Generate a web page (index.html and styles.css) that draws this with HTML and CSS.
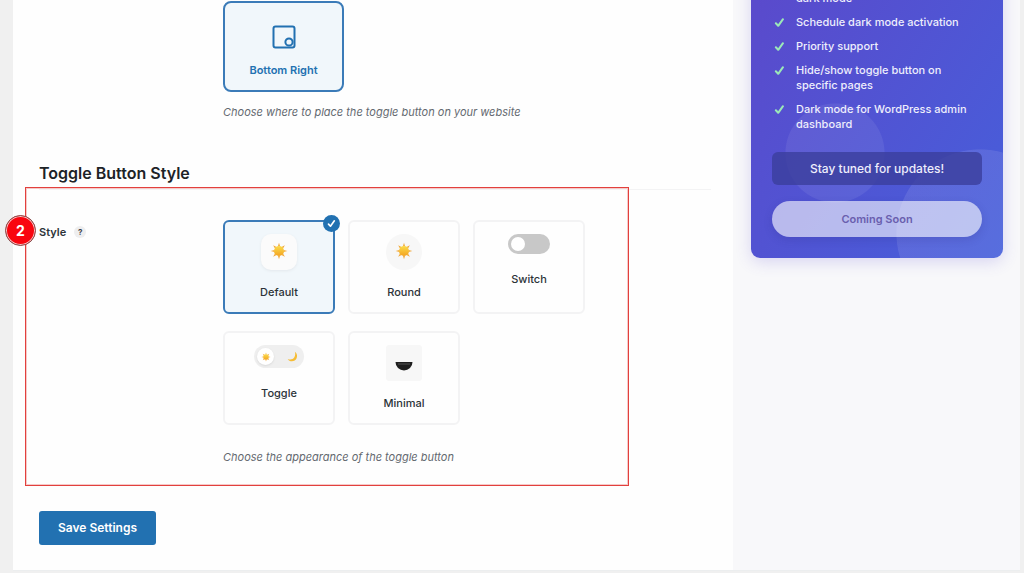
FILE: index.html
```
<!DOCTYPE html>
<html lang="en">
<head>
<meta charset="utf-8">
<meta name="viewport" content="width=device-width, initial-scale=1">
<title>Toggle Button Settings</title>
<link rel="stylesheet" href="styles.css">
</head>
<body>
<svg class="symbols" aria-hidden="true">
  <defs>
    <linearGradient id="sun-fill" x1="0" y1="0" x2="0" y2="1">
      <stop offset="0" stop-color="#fbdc4a"/>
      <stop offset="1" stop-color="#f3a322"/>
    </linearGradient>
  </defs>
  <symbol id="sun" viewBox="0 0 20 20">
    <path fill="#f2a93a" d="M10 0.800l1.200 4h-2.400zM10 19.200l1.200-4h-2.400zM0.800 10l4-1.200v2.400zM19.200 10l-4-1.200v2.400zM3.500 3.500l3.700 2-1.700 1.700zM16.500 3.500l-2 3.700-1.700-1.700zM3.500 16.500l2-3.700 1.700 1.700zM16.500 16.500l-3.700-2 1.700-1.700z"/>
    <circle cx="10" cy="10" r="5.6" fill="url(#sun-fill)"/>
  </symbol>
  <symbol id="check" viewBox="0 0 12 12">
    <path fill="none" stroke="currentColor" stroke-width="2.2" stroke-linecap="round" stroke-linejoin="round" d="M2 6.800l2.600 2.800L9.800 2.400"/>
  </symbol>
</svg>
<div class="shell">
  <main class="settings">
    <form class="form">
      <div class="row">
        <div class="field">
          <label class="tile tile-position">
            <input class="tile-input" type="radio" name="position" checked>
            <svg class="position-icon" viewBox="0 0 24 24" aria-hidden="true">
              <rect x="1.500" y="1.500" width="21" height="21" rx="2" fill="none" stroke="#2271b1" stroke-width="2"/>
              <circle cx="17" cy="17" r="3.600" fill="none" stroke="#2271b1" stroke-width="2"/>
            </svg>
            <span class="tile-name">Bottom Right</span>
          </label>
          <p class="hint">Choose where to place the toggle button on your website</p>
        </div>
      </div>

      <h2 class="section-title">Toggle Button Style</h2>

      <div class="row row-style">
        <div class="row-label">
          <span>Style</span>
          <button class="help" type="button" aria-label="Help">?</button>
        </div>
        <div class="field">
          <div class="tiles">
            <label class="tile tile-selected">
              <input class="tile-input" type="radio" name="style" checked>
              <span class="preview preview-default"><svg class="sun" aria-hidden="true"><use href="#sun"/></svg></span>
              <span class="tile-name">Default</span>
              <span class="tick"><svg class="tick-icon" aria-hidden="true"><use href="#check"/></svg></span>
            </label>
            <label class="tile">
              <input class="tile-input" type="radio" name="style">
              <span class="preview preview-round"><svg class="sun" aria-hidden="true"><use href="#sun"/></svg></span>
              <span class="tile-name">Round</span>
            </label>
            <label class="tile">
              <input class="tile-input" type="radio" name="style">
              <span class="preview preview-switch"><span class="switch-knob"></span></span>
              <span class="tile-name">Switch</span>
            </label>
            <label class="tile">
              <input class="tile-input" type="radio" name="style">
              <span class="preview preview-toggle">
                <span class="toggle-knob"><svg class="sun-small" aria-hidden="true"><use href="#sun"/></svg></span>
                <svg class="moon" viewBox="0 0 12 12" aria-hidden="true"><path fill="#f6bd35" d="M8.600 0.800C12 3.400 11.600 8.400 8.400 10.300C5.600 12 2 11 0.800 8.600C3.600 9.900 6.600 9.200 8 6.800C9.100 5 9.200 2.800 8.600 0.800z"/></svg>
              </span>
              <span class="tile-name">Toggle</span>
            </label>
            <label class="tile">
              <input class="tile-input" type="radio" name="style">
              <span class="preview preview-minimal"><svg class="half" viewBox="0 0 18 10" aria-hidden="true"><path fill="#1f1f1f" d="M0.500 1h17a8.500 8.500 0 0 1-17 0z"/><path stroke="#555" stroke-width="1" d="M3 3h12"/></svg></span>
              <span class="tile-name">Minimal</span>
            </label>
          </div>
          <p class="hint">Choose the appearance of the toggle button</p>
        </div>
        <div class="callout"><span class="callout-number">2</span></div>
      </div>

      <button class="save" type="submit">Save Settings</button>
    </form>
  </main>

  <aside class="sidebar">
    <section class="promo">
      <ul class="features">
        <li class="feature"><span class="feature-text">dark mode</span></li>
        <li class="feature"><svg class="feature-check" aria-hidden="true"><use href="#check"/></svg><span class="feature-text">Schedule dark mode activation</span></li>
        <li class="feature"><svg class="feature-check" aria-hidden="true"><use href="#check"/></svg><span class="feature-text">Priority support</span></li>
        <li class="feature"><svg class="feature-check" aria-hidden="true"><use href="#check"/></svg><span class="feature-text">Hide/show toggle button on specific pages</span></li>
        <li class="feature"><svg class="feature-check" aria-hidden="true"><use href="#check"/></svg><span class="feature-text">Dark mode for WordPress admin dashboard</span></li>
      </ul>
      <p class="notice">Stay tuned for updates!</p>
      <button class="soon" type="button">Coming Soon</button>
    </section>
  </aside>
</div>
</body>
</html>
```
FILE: styles.css
```
* { box-sizing: border-box; }

html { height: 100%; }

body {
  margin: 0;
  min-height: 100%;
  display: flex;
  padding: 0 4px 2px 13px;
  overflow: hidden;
  background: #f0f0f0;
  color: #2c3338;
  font-family: Inter, "Liberation Sans", sans-serif;
  font-size: 11px;
  line-height: 16px;
}

button { font: inherit; cursor: pointer; }

.symbols { position: absolute; width: 0; height: 0; }

.shell {
  flex: 1;
  display: grid;
  grid-template-columns: 1fr 287px;
  border-bottom: 1px solid #eceeef;
  background: #fefefe;
}

.settings { padding: 1px 22px 24px 26px; }

.row {
  position: relative;
  display: grid;
  grid-template-columns: 184px 1fr;
}

.field { grid-column: 2; }

.hint {
  margin: 12px 0 0;
  color: #646970;
  font-style: italic;
}

.section-title {
  margin: 41px 0 0;
  padding-bottom: 4px;
  border-bottom: 1px solid #f3f3f4;
  color: #1d2327;
  font-size: 16px;
  font-weight: 600;
  line-height: 24px;
}

.row-style { padding-top: 30px; }
.row-style .hint { margin-top: 24px; }

.row-label {
  display: flex;
  align-items: center;
  align-self: start;
  gap: 8px;
  padding-top: 4px;
  color: #2c3338;
  font-weight: 600;
}

.help {
  width: 12px;
  height: 12px;
  padding: 0;
  border: 0;
  border-radius: 50%;
  background: #eeeeef;
  color: #3c434a;
  font-size: 8px;
  font-weight: 700;
  line-height: 12px;
}

.tiles {
  display: grid;
  grid-template-columns: repeat(3, 112px);
  gap: 17px 13px;
}

.tile {
  position: relative;
  display: flex;
  flex-direction: column;
  align-items: center;
  min-height: 94px;
  padding: 12px;
  border: 2px solid #f3f3f4;
  border-radius: 6px;
  background: #fefefe;
  font-weight: 500;
  cursor: pointer;
}

.tile-input {
  position: absolute;
  inset: 0;
  width: 100%;
  height: 100%;
  margin: 0;
  opacity: 0;
}

.tile-selected,
.tile-position {
  border-color: #3b7bb8;
  background: #f1f7fb;
}

.tile-position {
  width: 121px;
  min-height: 91px;
  padding: 22px 12px 11px;
  gap: 13px;
  border-radius: 8px;
  color: #2271b1;
  font-weight: 600;
}

.position-icon { width: 24px; height: 24px; }

.preview {
  display: flex;
  align-items: center;
  justify-content: center;
  margin-bottom: 14px;
}

.preview-default,
.preview-round,
.preview-minimal { width: 36px; height: 36px; }

.preview-default {
  border-radius: 10px;
  background: #fbfbfb;
  box-shadow: 0 1px 3px #e3e8ec;
}

.preview-round { border-radius: 50%; background: #f7f7f7; }
.preview-minimal { border-radius: 3px; background: #f7f7f7; }

.sun { width: 18px; height: 18px; margin-bottom: 2px; }
.sun-small { width: 10px; height: 10px; }
.moon { width: 11px; height: 11px; }
.half { width: 18px; height: 10px; margin-top: 5px; }

.preview-switch {
  justify-content: start;
  width: 42px;
  height: 20px;
  margin-bottom: 17px;
  padding: 3px;
  border-radius: 10px;
  background: #c8c8c8;
}

.switch-knob {
  width: 14px;
  height: 14px;
  border-radius: 50%;
  background: #fff;
}

.preview-toggle {
  justify-content: space-between;
  width: 50px;
  height: 23px;
  margin-bottom: 17px;
  padding: 2px 6px 2px 3px;
  border-radius: 12px;
  background: #efefef;
}

.toggle-knob {
  display: flex;
  align-items: center;
  justify-content: center;
  width: 17px;
  height: 17px;
  border-radius: 50%;
  background: #fff;
  box-shadow: 0 1px 2px #d8d8d8;
}

.tick {
  position: absolute;
  top: -7px;
  right: -7px;
  display: flex;
  align-items: center;
  justify-content: center;
  width: 17px;
  height: 17px;
  border-radius: 50%;
  background: #2271b1;
  color: #fff;
}

.tick-icon { width: 9px; height: 9px; }

/* Numbered frame drawn over the style row */
.callout {
  position: absolute;
  top: -3px;
  right: 82px;
  bottom: -21px;
  left: -14px;
  border: 1px solid #e2403d;
  outline: 1px solid #f6c9c8;
  outline-offset: -2px;
  pointer-events: none;
}

.callout-number {
  position: absolute;
  top: 27px;
  left: -21px;
  width: 31px;
  height: 31px;
  border: 1px solid #8c5050;
  border-radius: 50%;
  background: #f9050f;
  box-shadow: inset 0 0 0 1px #f8c4c4;
  color: #fff;
  font-size: 14px;
  font-weight: 700;
  line-height: 29px;
  text-align: center;
}

.save {
  display: block;
  margin-top: 46px;
  padding: 8px 19px;
  border: 0;
  border-radius: 3px;
  background: #2271b1;
  color: #fff;
  font-size: 12px;
  font-weight: 600;
  line-height: 18px;
}

.sidebar {
  padding: 0 17px 0 18px;
  background: #f8f8fa;
}

.promo {
  position: relative;
  isolation: isolate;
  margin-top: -30px;
  padding: 21px;
  border-radius: 9px;
  background:
    radial-gradient(circle 50px at 84px 183px, #ffffff12 98%, #ffffff00),
    radial-gradient(circle 84px at 229px 263px, #ffffff18 99%, #ffffff00),
    linear-gradient(125deg, #5b49cb, #465fdb);
  box-shadow: 0 4px 16px #5b4bd033;
  color: #eeeefc;
  font-size: 11px;
}

.features {
  display: grid;
  gap: 9px;
  margin: 0;
  padding: 0;
  list-style: none;
  font-weight: 500;
  line-height: 15px;
}

.feature {
  display: grid;
  grid-template-columns: 14px 1fr;
  column-gap: 10px;
}

.feature-text { grid-column: 2; }

.feature-check {
  width: 11px;
  height: 11px;
  margin: 2px 0 0 2px;
  color: #9be8b8;
}

.notice {
  margin: 20px 0 16px;
  padding: 8px;
  border-radius: 6px;
  background: #3b3f9ccc;
  font-size: 12px;
  font-weight: 500;
  line-height: 17px;
  text-align: center;
}

.soon {
  display: block;
  width: 100%;
  padding: 10px;
  border: 0;
  border-radius: 18px;
  background: #ffffff99;
  box-shadow: 0 3px 8px #2a2a8030;
  color: #6a5fae;
  font-size: 11px;
  font-weight: 600;
}
```
